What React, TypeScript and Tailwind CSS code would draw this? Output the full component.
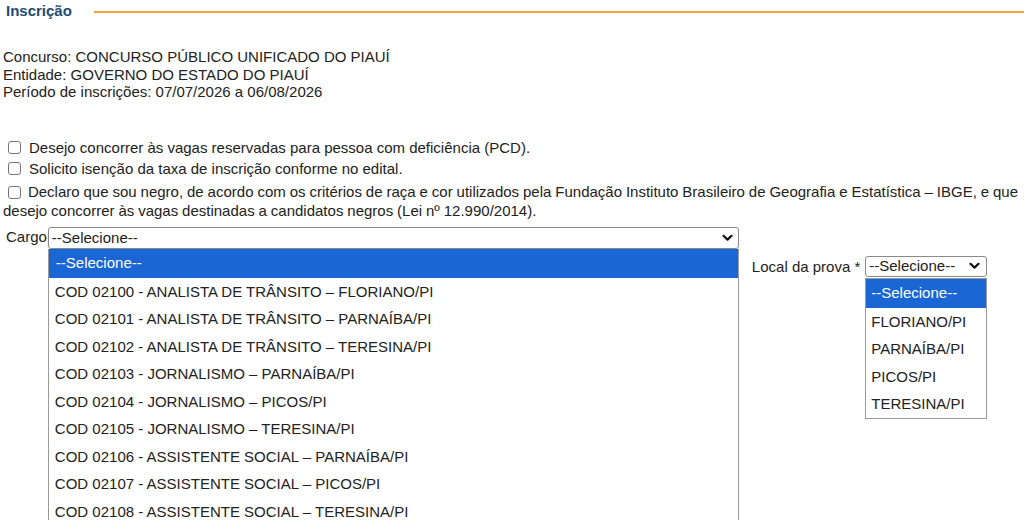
import React from "react";

const cargos = [
  "COD 02100 - ANALISTA DE TRÂNSITO – FLORIANO/PI",
  "COD 02101 - ANALISTA DE TRÂNSITO – PARNAÍBA/PI",
  "COD 02102 - ANALISTA DE TRÂNSITO – TERESINA/PI",
  "COD 02103 - JORNALISMO – PARNAÍBA/PI",
  "COD 02104 - JORNALISMO – PICOS/PI",
  "COD 02105 - JORNALISMO – TERESINA/PI",
  "COD 02106 - ASSISTENTE SOCIAL – PARNAÍBA/PI",
  "COD 02107 - ASSISTENTE SOCIAL – PICOS/PI",
  "COD 02108 - ASSISTENTE SOCIAL – TERESINA/PI",
];

const locais = ["FLORIANO/PI", "PARNAÍBA/PI", "PICOS/PI", "TERESINA/PI"];

function Chevron() {
  return (
    <svg width="11" height="8" viewBox="0 0 11 8" className="shrink-0">
      <path d="M1.5 1.8 L5.5 5.6 L9.5 1.8" fill="none" stroke="#111" strokeWidth="2.2" strokeLinecap="round" strokeLinejoin="round" />
    </svg>
  );
}

function Box() {
  return <span className="inline-block w-[13px] h-[13px] border border-[#767676] rounded-[3px] bg-white shrink-0" />;
}

export default function App() {
  return (
    <div
      className="w-[1024px] h-[520px] overflow-hidden bg-white text-[#222] text-[15px] leading-[17.5px]"
      style={{ fontFamily: '"Liberation Sans", Arial, sans-serif' }}
    >
      <div className="flex items-center pl-[6px] pt-[2px] h-[20px]">
        <span className="font-bold text-[15px] text-[#1d4d74]">Inscrição</span>
        <div className="flex-1 h-[2px] bg-[#f0a53e] ml-[22px] mt-[1px]" />
      </div>

      <div className="pl-[3px] mt-[28px]">
        <div>Concurso: CONCURSO PÚBLICO UNIFICADO DO PIAUÍ</div>
        <div>Entidade: GOVERNO DO ESTADO DO PIAUÍ</div>
        <div>Período de inscrições: 07/07/2026 a 06/08/2026</div>
      </div>

      <div className="pl-[3px] mt-[38px] flex flex-col gap-[4px]">
        <div className="flex items-center gap-[8px] pl-[5px]">
          <Box />
          <span>Desejo concorrer às vagas reservadas para pessoa com deficiência (PCD).</span>
        </div>
        <div className="flex items-center gap-[8px] pl-[5px]">
          <Box />
          <span>Solicito isenção da taxa de inscrição conforme no edital.</span>
        </div>
        <div className="leading-[19px] [word-spacing:-0.25px]">
          <span className="inline-flex items-center pl-[5px] pr-[3px] align-middle">
            <Box />
          </span>{" "}
          Declaro que sou negro, de acordo com os critérios de raça e cor utilizados pela Fundação Instituto Brasileiro de Geografia e Estatística – IBGE, e que desejo concorrer às vagas destinadas a candidatos negros (Lei nº 12.990/2014).
        </div>
      </div>

      <div className="flex items-start mt-[7px]">
        <div className="relative flex items-start">
          <span className="pl-[6px] pr-[1px] mt-[1px]">Cargo</span>
          <div className="relative">
            <div className="w-[691px] h-[22px] border border-[#8a8a8a] rounded-[3px] flex items-center justify-between pl-[3px] pr-[5px] bg-white">
              <span>--Selecione--</span>
              <Chevron />
            </div>
            <div className="absolute left-0 top-[22px] w-[691px] border-l border-r border-[#9a9a9a] bg-white">
              <div className="h-[29px] flex items-center pl-[7px] bg-[#1a66d4] text-white">--Selecione--</div>
              {cargos.map((c) => (
                <div key={c} className="h-[27.5px] flex items-center pl-[6px]">
                  {c}
                </div>
              ))}
            </div>
          </div>
        </div>
        <div className="flex items-start ml-[13px] mt-[29px]">
          <span className="mt-[2px] mr-[5px]">Local da prova *</span>
          <div className="relative">
            <div className="w-[122px] h-[21px] border border-[#8a8a8a] rounded-[3px] flex items-center justify-between pl-[3px] pr-[6px] bg-white">
              <span>--Selecione--</span>
              <Chevron />
            </div>
            <div className="absolute left-0 top-[22px] w-[122px] border border-[#9a9a9a] bg-white">
              <div className="h-[29px] flex items-center pl-[5px] bg-[#1a66d4] text-white">--Selecione--</div>
              {locais.map((c) => (
                <div key={c} className="h-[27.5px] flex items-center pl-[5px]">
                  {c}
                </div>
              ))}
            </div>
          </div>
        </div>
      </div>
    </div>
  );
}
